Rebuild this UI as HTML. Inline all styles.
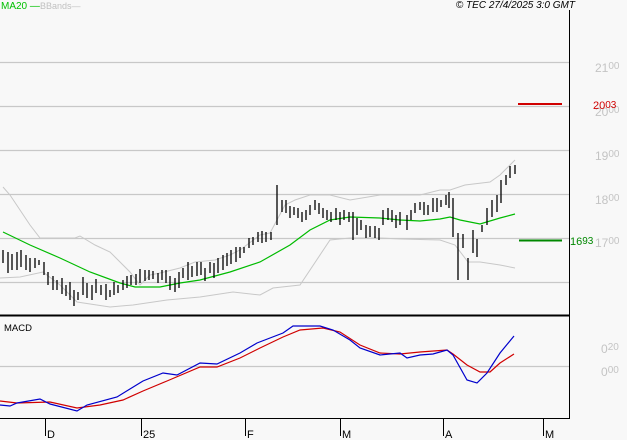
<!DOCTYPE html>
<html><head><meta charset="utf-8"><style>
html,body{margin:0;padding:0;background:#f8f8f8;}
svg{display:block;font-family:"Liberation Sans",sans-serif;}
</style></head><body>
<svg width="627" height="440" viewBox="0 0 627 440" xmlns="http://www.w3.org/2000/svg">
<rect width="627" height="440" fill="#f8f8f8"/>
<g stroke="#c8c8c8" stroke-width="1.2">
<line x1="0" y1="62.5" x2="569" y2="62.5"/>
<line x1="0" y1="106.5" x2="569" y2="106.5"/>
<line x1="0" y1="150.5" x2="569" y2="150.5"/>
<line x1="0" y1="194.5" x2="569" y2="194.5"/>
<line x1="0" y1="238.5" x2="569" y2="238.5"/>
<line x1="0" y1="282.5" x2="569" y2="282.5"/>
<line x1="0" y1="366.5" x2="569" y2="366.5"/>
</g>
<line x1="569.5" y1="10" x2="569.5" y2="419" stroke="#000"/>
<line x1="0" y1="315.5" x2="570" y2="315.5" stroke="#000" stroke-width="2"/>
<line x1="0" y1="418.5" x2="570" y2="418.5" stroke="#000"/>
<g stroke="#000">
<line x1="45.5" y1="418" x2="45.5" y2="436"/><line x1="141.5" y1="418" x2="141.5" y2="436"/>
<line x1="245.5" y1="418" x2="245.5" y2="436"/><line x1="340.5" y1="418" x2="340.5" y2="436"/>
<line x1="443.5" y1="418" x2="443.5" y2="436"/><line x1="543.5" y1="418" x2="543.5" y2="436"/>
</g>
<g font-size="11" fill="#000">
<text x="47" y="438">D</text><text x="143" y="438">25</text><text x="247" y="438">F</text>
<text x="342" y="438">M</text><text x="445" y="438">A</text><text x="545" y="438">M</text>
</g>
<text x="1" y="9" font-size="10" fill="#00c000">MA20 —</text>
<text x="40" y="9" font-size="9" fill="#c0c0c0">BBands—</text>
<text x="575" y="8" font-size="10" font-style="italic" fill="#000" text-anchor="end">© TEC 27/4/2025 3:0 GMT</text>
<text x="4" y="331" font-size="9.5" fill="#000">MACD</text>
<g font-size="12" fill="#c4c4c4">
<text x="595" y="72">21<tspan font-size="10" dy="-3">00</tspan></text>
<text x="595" y="116">20<tspan font-size="10" dy="-3">00</tspan></text>
<text x="595" y="160">19<tspan font-size="10" dy="-3">00</tspan></text>
<text x="595" y="204">18<tspan font-size="10" dy="-3">00</tspan></text>
<text x="595" y="247">17<tspan font-size="10" dy="-3">00</tspan></text>
<text x="601" y="353">0<tspan font-size="10" dy="-3">20</tspan></text>
<text x="601" y="376">0<tspan font-size="10" dy="-3">00</tspan></text>
</g>
<line x1="518" y1="104" x2="562" y2="104" stroke="#d00000" stroke-width="2"/>
<text x="593" y="109" font-size="11" fill="#d00000">20<tspan font-size="10" dy="-1">03</tspan></text>
<line x1="519" y1="240.5" x2="562" y2="240.5" stroke="#008800" stroke-width="2"/>
<text x="570" y="245" font-size="11" fill="#008800">16<tspan font-size="10" dy="-1">93</tspan></text>
<g fill="none" stroke="#c8c8c8" stroke-width="1">
<polyline points="3,187 10,195 30,225 40,238 60,238 75,238 80,236 95,245 110,252 130,272 140,285 150,275 160,273 180,268 195,262 215,260 230,255 240,250 260,235 270,233 285,205 295,200 310,195 330,195 350,200 380,195 420,195 440,190 450,190 465,185 490,182 500,175 515,160"/>
<polyline points="0,278 20,277 43,272 60,285 77,302 110,307 133,305 167,300 200,297 233,292 260,295 273,288 300,285 330,240 350,238 380,238 400,239 440,240 455,245 468,262 480,262 500,265 515,268"/>
</g>
<polyline fill="none" stroke="#00bb00" stroke-width="1.2" points="3,232 30,245 60,258 90,272 120,283 135,287 160,287 180,283 200,280 230,272 260,262 290,245 310,230 330,220 350,217 380,218 400,220 420,221 440,219 450,217 460,220 480,224 500,218 515,214"/>
<path stroke="#000" stroke-width="1.3" fill="none" d="M3 250V263M8 252V273M12 254V270M17 252V270M21 250V267M26 255V270M30 258V272M35 258V268M39 260V265M44 262V275M48 272V285M53 276V290M57 280V290M62 278V294M66 285V296M70 282V300M74 290V306M78 292V300M83 277V295M87 283V298M92 285V300M96 279V293M101 285V295M106 284V300M110 290V297M114 282V295M118 285V293M123 280V290M127 276V288M131 275V285M136 274V285M140 269V283M145 270V281M149 270V280M153 271V279M158 273V283M162 270V280M166 270V283M170 276V290M175 278V292M179 272V288M183 268V278M188 262V280M192 266V277M197 262V276M201 262V275M205 268V281M210 262V273M214 263V278M218 258V273M223 255V270M227 253V266M231 250V264M236 247V262M240 247V258M244 247V253M249 238V248M253 237V245M258 232V242M262 231V243M266 232V242M271 232V240M277 185V225M282 200V212M286 200V213M290 206V218M294 207V215M298 208V218M302 212V222M306 210V220M310 205V215M315 200V210M319 203V214M323 208V218M327 210V220M331 212V222M336 208V220M340 212V225M344 210V220M349 212V222M353 212V240M357 218V235M361 220V230M366 225V238M370 226V237M375 226V238M379 228V240M383 210V225M388 208V220M392 210V222M396 215V228M400 212V225M407 215V230M411 210V220M415 203V213M420 202V210M424 202V215M428 205V215M433 198V212M437 198V212M441 200V207M446 195V205M449 192V208M453 198V237M458 233V280M463 234V248M468 258V280M473 230V253M477 239V257M482 225V232M487 208V225M492 200V217M497 195V212M501 180V203M506 175V185M510 166V178M515 165V174"/>
<polyline fill="none" stroke="#d00000" stroke-width="1.2" points="0,401 17,403 50,402 77,408 100,405 123,400 143,391 167,381 200,367 217,367 240,358 260,348 283,337 300,330 323,328 340,332 360,345 380,353 400,354 420,352 447,350 453,354 467,365 480,372 490,372 500,363 514,354"/>
<polyline fill="none" stroke="#0000cc" stroke-width="1.2" points="0,405 10,406 17,403 40,399 50,404 77,411 87,405 117,397 143,381 163,373 177,375 200,363 217,364 240,353 257,343 283,333 293,326 320,326 333,330 350,340 360,348 380,355 400,353 407,358 420,355 433,354 447,350 453,355 467,380 477,383 487,373 500,353 514,336"/>
</svg>
</body></html>
